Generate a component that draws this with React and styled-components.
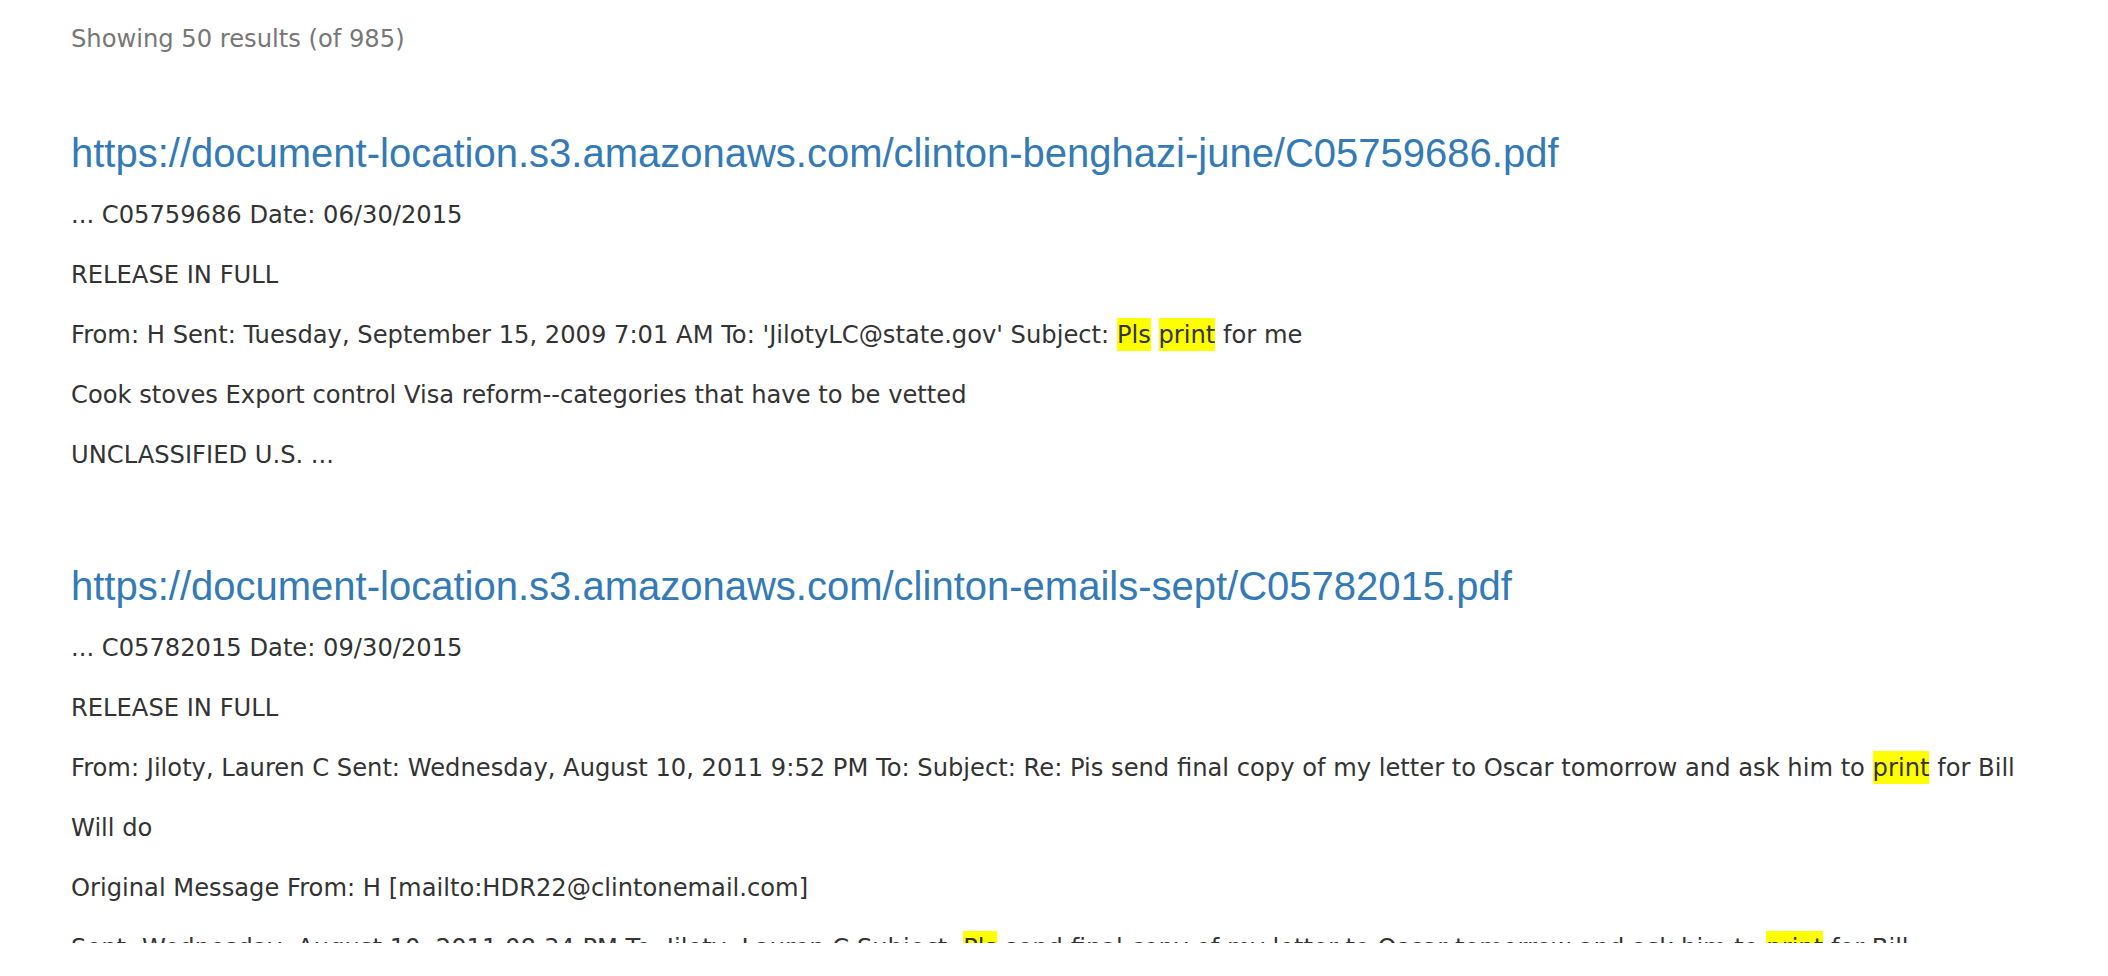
import React from "react";
import styled, { createGlobalStyle } from "styled-components";

const GlobalStyle = createGlobalStyle`
  html, body {
    margin: 0;
    padding: 0;
    background: #ffffff;
  }
  body {
    font-family: "DejaVu Sans", "Liberation Sans", sans-serif;
    color: #333333;
  }
`;

const Viewport = styled.div`
  height: 943px;
  overflow: hidden;
  background: #ffffff;
`;

const Page = styled.main`
  padding: 19px 0 0 71px;
`;

const Summary = styled.p`
  margin: 0 0 72px;
  font-family: "DejaVu Sans", "Liberation Sans", sans-serif;
  font-size: 24.2px;
  line-height: 40px;
  color: #777777;
`;

const ResultList = styled.div`
  display: flex;
  flex-direction: column;
  gap: 69px;
`;

const Result = styled.article`
  display: block;
`;

const ResultLink = styled.a`
  display: block;
  margin: 0 0 20px;
  font-family: "Liberation Sans", Arial, sans-serif;
  font-size: 40px;
  line-height: 44px;
  color: #337ab7;
  text-decoration: none;
  white-space: nowrap;
`;

const Snippet = styled.p`
  margin: 0 0 20px;
  font-family: "DejaVu Sans", "Liberation Sans", sans-serif;
  font-size: 24.2px;
  line-height: 40px;
  color: #333333;
  white-space: nowrap;
`;

const Hit = styled.span`
  background: #ffff00;
  padding: 3px 0 2px;
`;

const renderLine = (line) => {
  const parts = line.split(/(\[\[[^\]]+\]\])/g);
  return parts.map((p, i) =>
    p.startsWith("[[") ? <Hit key={i}>{p.slice(2, -2)}</Hit> : <React.Fragment key={i}>{p}</React.Fragment>
  );
};

const results = [
  {
    url: "https://document-location.s3.amazonaws.com/clinton-benghazi-june/C05759686.pdf",
    lines: [
      "... C05759686 Date: 06/30/2015",
      "RELEASE IN FULL",
      "From: H Sent: Tuesday, September 15, 2009 7:01 AM To: 'JilotyLC@state.gov' Subject: [[Pls]] [[print]] for me",
      "Cook stoves Export control Visa reform--categories that have to be vetted",
      "UNCLASSIFIED U.S. ...",
    ],
  },
  {
    url: "https://document-location.s3.amazonaws.com/clinton-emails-sept/C05782015.pdf",
    lines: [
      "... C05782015 Date: 09/30/2015",
      "RELEASE IN FULL",
      "From: Jiloty, Lauren C Sent: Wednesday, August 10, 2011 9:52 PM To: Subject: Re: Pis send final copy of my letter to Oscar tomorrow and ask him to [[print]] for Bill",
      "Will do",
      "Original Message From: H [mailto:HDR22@clintonemail.com]",
      "Sent: Wednesday, August 10, 2011 08:34 PM To: Jiloty, Lauren C Subject: [[Pls]] send final copy of my letter to Oscar tomorrow and ask him to [[print]] for Bill",
      "UNCLASSIFIED U.S. ...",
    ],
  },
];

export default function App() {
  return (
    <>
      <GlobalStyle />
      <Viewport>
        <Page>
          <Summary>Showing 50 results (of 985)</Summary>
          <ResultList>
            {results.map((r) => (
              <Result key={r.url}>
                <ResultLink href={r.url}>{r.url}</ResultLink>
                {r.lines.map((l, i) => (
                  <Snippet key={i}>{renderLine(l)}</Snippet>
                ))}
              </Result>
            ))}
          </ResultList>
        </Page>
      </Viewport>
    </>
  );
}
